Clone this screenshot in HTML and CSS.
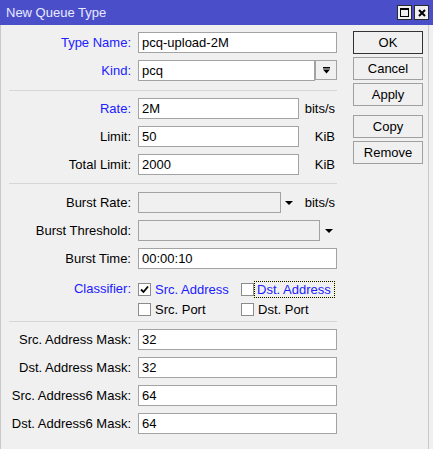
FILE: index.html
```html
<!DOCTYPE html>
<html>
<head>
<meta charset="utf-8">
<link rel="stylesheet" href="styles.css">
</head>
<body>
<div class="window">
  <div class="titlebar">
    <span class="title">New Queue Type</span>
    <div class="tb-btns">
      <span class="tb-btn"><svg width="9" height="9" viewBox="0 0 9 9"><rect x="0.5" y="0.5" width="8" height="8" fill="none" stroke="#000"/><rect x="0" y="0" width="9" height="2" fill="#000"/></svg></span>
      <span class="tb-btn"><svg width="8" height="8" viewBox="0 0 8 8"><path d="M1 1 L7 7 M7 1 L1 7" stroke="#000" stroke-width="2"/></svg></span>
    </div>
  </div>
  <div class="body">
    <div class="form">
      <div class="row">
        <span class="lbl blue">Type Name:</span>
        <div class="field"><div class="input">pcq-upload-2M</div></div>
      </div>
      <div class="row">
        <span class="lbl blue">Kind:</span>
        <div class="field">
          <div class="input">pcq</div>
          <span class="dd"><svg width="7" height="7" viewBox="0 0 7 7"><rect x="0" y="0" width="7" height="1.5" fill="#000"/><polygon points="0,2.5 7,2.5 3.5,6.5" fill="#000"/></svg></span>
        </div>
      </div>
      <div class="sep sep-a"></div>
      <div class="row">
        <span class="lbl blue">Rate:</span>
        <div class="field"><div class="input input-unit">2M</div><span class="unit">bits/s</span></div>
      </div>
      <div class="row">
        <span class="lbl">Limit:</span>
        <div class="field"><div class="input input-unit">50</div><span class="unit">KiB</span></div>
      </div>
      <div class="row">
        <span class="lbl">Total Limit:</span>
        <div class="field"><div class="input input-unit">2000</div><span class="unit">KiB</span></div>
      </div>
      <div class="sep sep-b"></div>
      <div class="row">
        <span class="lbl">Burst Rate:</span>
        <div class="field">
          <div class="input disabled burst-rate"></div>
          <svg class="arrow" width="8" height="4" viewBox="0 0 8 4"><polygon points="0,0 8,0 4,4" fill="#000"/></svg>
          <span class="unit">bits/s</span>
        </div>
      </div>
      <div class="row">
        <span class="lbl">Burst Threshold:</span>
        <div class="field">
          <div class="input disabled burst-threshold"></div>
          <svg class="arrow arrow-b" width="8" height="4" viewBox="0 0 8 4"><polygon points="0,0 8,0 4,4" fill="#000"/></svg>
        </div>
      </div>
      <div class="row">
        <span class="lbl">Burst Time:</span>
        <div class="field"><div class="input">00:00:10</div></div>
      </div>
      <div class="classifier">
        <span class="lbl blue cls-lbl">Classifier:</span>
        <div class="cb-grid">
          <div class="cb blue"><span class="box"><svg width="11" height="11" viewBox="0 0 11 11"><path d="M2 5.5 L4.5 8 L9 2.5" fill="none" stroke="#000" stroke-width="1.8"/></svg></span>Src. Address</div>
          <div class="cb blue"><span class="box box-tight"></span><span class="focus">Dst. Address</span></div>
          <div class="cb"><span class="box"></span>Src. Port</div>
          <div class="cb"><span class="box"></span>Dst. Port</div>
        </div>
      </div>
      <div class="sep sep-c"></div>
      <div class="row">
        <span class="lbl">Src. Address Mask:</span>
        <div class="field"><div class="input">32</div></div>
      </div>
      <div class="row">
        <span class="lbl">Dst. Address Mask:</span>
        <div class="field"><div class="input">32</div></div>
      </div>
      <div class="row">
        <span class="lbl">Src. Address6 Mask:</span>
        <div class="field"><div class="input">64</div></div>
      </div>
      <div class="row">
        <span class="lbl">Dst. Address6 Mask:</span>
        <div class="field"><div class="input">64</div></div>
      </div>
    </div>
    <div class="buttons">
      <div class="btn default">OK</div>
      <div class="btn">Cancel</div>
      <div class="btn">Apply</div>
      <div class="btn btn-gap">Copy</div>
      <div class="btn">Remove</div>
    </div>
  </div>
</div>
</body>
</html>
```
FILE: styles.css
```css
html, body {
  margin: 0;
  padding: 0;
  background: #f0f0f0;
}
.window {
  width: 433px;
  height: 449px;
  background: #f0f0f0;
  display: flex;
  flex-direction: column;
  font-family: "Liberation Sans", Arial, sans-serif;
  font-size: 13px;
  color: #000;
  overflow: hidden;
}
.titlebar {
  height: 25px;
  flex: none;
  background: #4b4ec9;
  display: flex;
  align-items: center;
  justify-content: space-between;
  padding: 0 4px 0 6px;
  color: #e8eaff;
}
.tb-btns {
  display: flex;
  gap: 2px;
}
.tb-btn {
  width: 15px;
  height: 15px;
  box-sizing: border-box;
  border: 1px solid #2a2a2a;
  background: #f0f0f0;
  display: flex;
  align-items: center;
  justify-content: center;
}
.body {
  flex: 1;
  display: flex;
  border-left: 1px solid #c8c8c8;
  border-right: 1px solid #c8c8c8;
  margin-right: 4px;
}
.form {
  width: 336px;
  padding-top: 7px;
}
.row {
  display: flex;
  align-items: center;
  height: 21px;
  margin-top: 7px;
}
.form > .row:first-child {
  margin-top: 0;
}
.lbl {
  width: 130px;
  flex: none;
  text-align: right;
  margin-right: 7px;
  white-space: nowrap;
}
.blue {
  color: #2020ff;
}
.field {
  width: 199px;
  height: 21px;
  display: flex;
  align-items: center;
}
.input {
  box-sizing: border-box;
  height: 21px;
  flex: 1;
  border: 1px solid #a3a3a3;
  background: #fff;
  padding: 0 3px;
  line-height: 19px;
  white-space: nowrap;
}
.input-unit {
  flex: none;
  width: 161px;
}
.disabled {
  background: #f0f0f0;
}
.burst-rate {
  flex: none;
  width: 143px;
}
.burst-threshold {
  flex: none;
  width: 182px;
}
.arrow {
  margin-left: 4px;
  flex: none;
}
.arrow-b {
  margin-left: 5px;
}
.unit {
  flex: 1;
  text-align: right;
  padding-right: 2px;
  white-space: nowrap;
}
.dd {
  flex: none;
  width: 22px;
  height: 20px;
  align-self: flex-start;
  box-sizing: border-box;
  border: 1px solid #a3a3a3;
  background: #f0f0f0;
  display: flex;
  align-items: center;
  justify-content: center;
}
.sep {
  height: 1px;
  background: #d6d6d6;
  margin-left: 8px;
  width: 328px;
}
.sep-a {
  margin-top: 9px;
}
.sep-b {
  margin-top: 8px;
}
.sep-b + .row {
  margin-top: 8px;
}
.sep-c {
  margin-top: 2px;
}
.classifier {
  display: flex;
  margin-top: 10px;
}
.cls-lbl {
  height: 20px;
  line-height: 20px;
}
.cb-grid {
  display: grid;
  grid-template-columns: 103px auto;
  grid-auto-rows: 20px;
}
.cb {
  display: flex;
  align-items: center;
  white-space: nowrap;
}
.box {
  width: 13px;
  height: 13px;
  box-sizing: border-box;
  border: 1px solid #8c8c8c;
  background: #fff;
  margin-right: 4px;
  display: flex;
  align-items: center;
  justify-content: center;
  flex: none;
}
.box-tight {
  margin-right: 0;
}
.focus {
  height: 17px;
  box-sizing: border-box;
  border: 1px dotted #000;
  padding: 0 3px 0 2px;
  line-height: 15px;
  background: linear-gradient(#f0f0f0, #f0f0f0) padding-box, linear-gradient(#ffff90, #ffff90) border-box;
}
.buttons {
  margin-left: 16px;
  padding-top: 6px;
  width: 70px;
  display: flex;
  flex-direction: column;
  gap: 3px;
}
.btn {
  height: 23px;
  box-sizing: border-box;
  border: 1px solid #a0a0a0;
  background: #f0f0f0;
  display: flex;
  align-items: center;
  justify-content: center;
}
.btn.default {
  border-color: #333;
}
.btn-gap {
  margin-top: 6px;
}
```
